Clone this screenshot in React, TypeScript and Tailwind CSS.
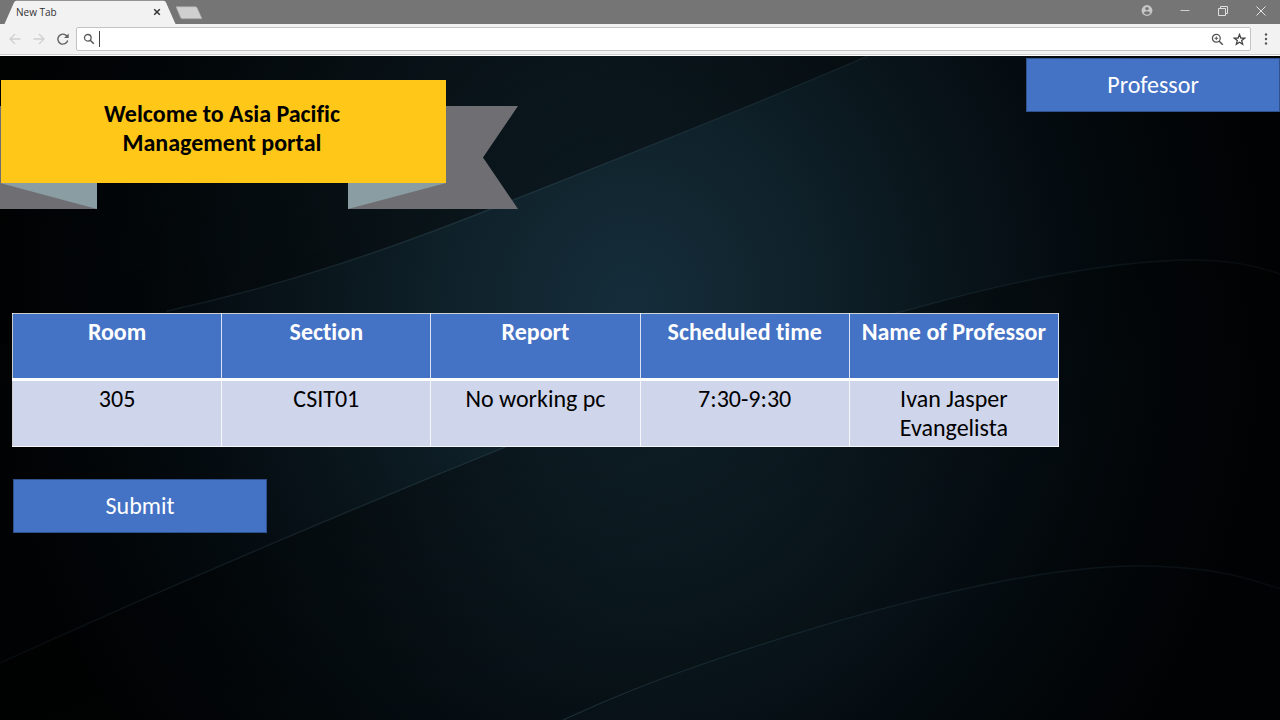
import React from "react";

const columns = ["Room", "Section", "Report", "Scheduled time", "Name of Professor"];
const rows = [["305", "CSIT01", "No working pc", "7:30-9:30", "Ivan Jasper Evangelista"]];

function TabStrip() {
  return (
    <div className="flex h-6 items-stretch justify-between bg-[#757575]">
      <div className="flex">
        <div className="relative h-6 w-[176px]">
          <svg className="absolute inset-0" width="176" height="24" viewBox="0 0 176 24" aria-hidden="true">
            <path d="M4.500 24L14 2.500Q14.800 0.700 16.500 0.700H163.500Q165.300 0.700 166 2.500L175.500 24Z" fill="#f2f2f2" />
          </svg>
          <div className="relative flex h-6 items-center justify-between pr-[14px] pl-4">
            <span className="text-[10px] leading-4 text-[#333]">New Tab</span>
            <button aria-label="Close tab" className="flex size-[10px] items-center justify-center">
              <svg width="8" height="8" viewBox="0 0 8 8" stroke="#333" strokeWidth="1.500">
                <path d="M1.200 1.200L6.800 6.800M6.800 1.200L1.200 6.800" />
              </svg>
            </button>
          </div>
        </div>
        <button aria-label="New tab" className="flex items-center pt-[2px]">
          <svg width="28" height="14" viewBox="0 0 28 14">
            <path d="M0 0.700H19.500Q20.700 0.700 21.200 2L26 12.700H6.500Q5 12.700 4.400 11.200Z" fill="#cfcfcf" stroke="#a5a5a5" strokeWidth="0.700" />
          </svg>
        </button>
      </div>
      <div className="flex items-center gap-[22px] pr-[11px] pb-[2px]">
        <button aria-label="Account" className="flex w-4 justify-center">
          <svg width="12" height="12" viewBox="0 0 12 12">
            <circle cx="6" cy="5.500" r="5.400" fill="#c6c6c6" />
            <circle cx="6" cy="3.600" r="1.700" fill="#757575" />
            <path d="M2.700 8Q3.400 6.300 6 6.300T9.300 8Q8 9.700 6 9.700T2.700 8Z" fill="#757575" />
          </svg>
        </button>
        <button aria-label="Minimize" className="flex w-4 justify-center">
          <svg width="10" height="10" viewBox="0 0 10 10" stroke="#d0d0d0"><path d="M0.500 4.500H9.500" /></svg>
        </button>
        <button aria-label="Restore" className="flex w-4 justify-center">
          <svg width="10" height="10" viewBox="0 0 10 10" stroke="#dedede" fill="none">
            <path d="M0.500 2.500H7.500V9.500H0.500ZM2.500 2.500V0.500H9.500V7.500H7.500" />
          </svg>
        </button>
        <button aria-label="Close" className="flex w-4 justify-center">
          <svg width="10" height="10" viewBox="0 0 10 10" stroke="#e6e6e6"><path d="M0.500 0.500L9.500 9.500M9.500 0.500L0.500 9.500" /></svg>
        </button>
      </div>
    </div>
  );
}

function Toolbar() {
  return (
    <div className="flex h-8 items-center border-b border-white bg-[#f2f2f2] px-2 pb-px shadow-[inset_0_-1px_0_#cfcfcf]">
      <div className="flex items-center gap-[10px]">
        <button aria-label="Back" className="flex size-[14px] items-center justify-center">
          <svg width="12" height="12" viewBox="0 0 12 12" fill="none" stroke="#d0d0d0" strokeWidth="1.300"><path d="M11.500 6H1.500M6 1L1 6L6 11" /></svg>
        </button>
        <button aria-label="Forward" className="flex size-[14px] items-center justify-center">
          <svg width="12" height="12" viewBox="0 0 12 12" fill="none" stroke="#d0d0d0" strokeWidth="1.300"><path d="M0.500 6H10.500M6 1L11 6L6 11" /></svg>
        </button>
        <button aria-label="Reload" className="flex size-[14px] items-center justify-center">
          <svg width="12" height="12" viewBox="0 0 12 12"><path d="M9.800 3A5 5 0 1 0 10.700 7.500" fill="none" stroke="#606060" strokeWidth="1.400" /><path d="M11.700 0.400V5H7.100Z" fill="#606060" /></svg>
        </button>
      </div>
      <div className="ml-[6px] flex h-6 flex-1 items-center rounded-[2px] border border-[#c3c3c3] bg-white pr-1 pl-[6px]">
        <svg width="12" height="12" viewBox="0 0 12 12" fill="none" stroke="#5a5a5a" aria-hidden="true">
          <circle cx="4.800" cy="4.800" r="3.300" strokeWidth="1.300" /><path d="M7.200 7.200L10.800 10.800" strokeWidth="1.600" />
        </svg>
        <span className="ml-1 h-4 w-px bg-[#444]" />
        <input aria-label="Address" className="h-5 min-w-0 flex-1 bg-transparent text-xs caret-transparent outline-none" />
        <div className="flex gap-[9px]">
          <button aria-label="Zoom" className="flex size-[13px] items-center justify-center">
            <svg width="13" height="13" viewBox="0 0 13 13" fill="none" stroke="#555">
              <circle cx="5.300" cy="5.300" r="3.900" strokeWidth="1.300" /><path d="M3.500 5.300H7.100M5.300 3.500V7.100" /><path d="M8.200 8.200L11.800 11.800" strokeWidth="1.600" />
            </svg>
          </button>
          <button aria-label="Bookmark" className="flex size-[13px] items-center justify-center">
            <svg width="13" height="13" viewBox="0 0 13 13" fill="none" stroke="#444" strokeWidth="1.300">
              <path d="M6.500 1.500L7.900 5L11.600 5.200L8.700 7.600L9.700 11.300L6.500 9.200L3.300 11.300L4.300 7.600L1.400 5.200L5.100 5Z" />
            </svg>
          </button>
        </div>
      </div>
      <button aria-label="Menu" className="ml-[9px] flex w-3 justify-center">
        <svg width="4" height="12" viewBox="0 0 4 12" fill="#555"><circle cx="2" cy="1.500" r="1.200" /><circle cx="2" cy="6" r="1.200" /><circle cx="2" cy="10.500" r="1.200" /></svg>
      </button>
    </div>
  );
}

function Backdrop() {
  return (
    <svg className="absolute inset-0 -z-10 h-full w-full" viewBox="0 0 1280 664" preserveAspectRatio="none" aria-hidden="true">
      <defs>
        <radialGradient id="glow" gradientUnits="userSpaceOnUse" cx="0" cy="0" r="1" gradientTransform="translate(630 250) scale(640 720)">
          <stop offset="0" stopColor="#152d3b" />
          <stop offset="0.250" stopColor="#10232c" />
          <stop offset="0.500" stopColor="#09151b" />
          <stop offset="0.750" stopColor="#03090d" />
          <stop offset="1" stopColor="#010203" />
        </radialGradient>
        <linearGradient id="upper" gradientUnits="userSpaceOnUse" x1="430" y1="0" x2="495" y2="150">
          <stop offset="0" stopColor="#000" stopOpacity="0.250" />
          <stop offset="1" stopColor="#000" stopOpacity="0.380" />
        </linearGradient>
        <linearGradient id="lower" gradientUnits="userSpaceOnUse" x1="506" y1="392" x2="590" y2="600">
          <stop offset="0" stopColor="#000" stopOpacity="0.320" />
          <stop offset="1" stopColor="#000" stopOpacity="0.120" />
        </linearGradient>
        <linearGradient id="edge" gradientUnits="userSpaceOnUse" x1="0" y1="0" x2="1280" y2="0">
          <stop offset="0" stopColor="#27404a" stopOpacity="0.150" />
          <stop offset="0.420" stopColor="#2f4853" stopOpacity="0.550" />
          <stop offset="0.650" stopColor="#27404a" stopOpacity="0.350" />
          <stop offset="1" stopColor="#27404a" stopOpacity="0.150" />
        </linearGradient>
      </defs>
      <rect width="1280" height="664" fill="url(#glow)" />
      <path d="M0 0H868C750 51 630 98 513 144C400 190 290 228 167 255L0 290Z" fill="url(#upper)" />
      <path d="M0 607C170 530 330 462 498 394C640 335 780 287 923 250C1010 226 1110 204 1195 204Q1240 204 1280 218V533C1230 515 1190 510 1137 510C1050 510 900 540 700 609L563 664H0Z" fill="url(#lower)" />
      <g fill="none" stroke="url(#edge)" strokeWidth="1.300">
        <path d="M868 0C750 51 630 98 513 144C400 190 290 228 167 255" />
        <path d="M0 607C170 530 330 462 498 394C640 335 780 287 923 250C1010 226 1110 204 1195 204Q1240 204 1280 218" />
        <path d="M563 664Q630 633 700 609C900 540 1050 510 1137 510C1190 510 1230 515 1280 533" />
      </g>
    </svg>
  );
}

function WelcomeBanner() {
  return (
    <div className="relative h-[130px] w-[518px] pl-px">
      <svg className="absolute inset-0" width="518" height="130" viewBox="0 0 518 130" aria-hidden="true">
        <path d="M0 26H97V129H0ZM348 26H518L483 77.500L518 129H348Z" fill="#6f6f73" />
        <path d="M0 103H97V129ZM446 103H348V129Z" fill="#8a9da3" />
      </svg>
      <h1 className="relative flex h-[103px] w-[445px] items-center justify-center bg-[#ffc818] pr-[3px] pb-2 text-center font-bold text-black">
        <span className="w-[260px]">Welcome to Asia Pacific Management portal</span>
      </h1>
    </div>
  );
}

function BlockButton({ children }: { children: React.ReactNode }) {
  return (
    <button className="h-[54px] w-[254px] border border-[#2f528f] bg-[#4472c4] pb-[2px] text-white">
      {children}
    </button>
  );
}

export default function App() {
  return (
    <div className="flex min-h-screen flex-col bg-black font-['Open_Sans','Noto_Sans',sans-serif]">
      <header>
        <TabStrip />
        <Toolbar />
      </header>
      <main className="relative isolate flex-1 pb-6 font-[Carlito,Lato,sans-serif] text-2xl leading-[29px] [font-variant-ligatures:none]">
        <Backdrop />
        <div className="flex items-start justify-between">
          <div className="pt-6">
            <WelcomeBanner />
          </div>
          <div className="pt-[2px]">
            <BlockButton>Professor</BlockButton>
          </div>
        </div>
        <div className="px-3 pt-[103px]">
          <table className="w-[1047px] max-w-full table-fixed border-collapse border border-white text-center">
            <thead>
              <tr className="h-[66px] bg-[#4472c4] text-white">
                {columns.map((name) => (
                  <th key={name} scope="col" className="border border-b-[3px] border-white/80 border-b-white pt-[3px] align-top font-bold whitespace-nowrap">
                    {name}
                  </th>
                ))}
              </tr>
            </thead>
            <tbody>
              {rows.map((row) => (
                <tr key={row[0]} className="h-[67px] bg-[#cfd5ea] text-black">
                  {row.map((cell) => (
                    <td key={cell} className="border border-white/80 px-8 pt-[3px] align-top">
                      {cell}
                    </td>
                  ))}
                </tr>
              ))}
            </tbody>
          </table>
          <div className="pt-8 pl-px">
            <BlockButton>Submit</BlockButton>
          </div>
        </div>
      </main>
    </div>
  );
}
